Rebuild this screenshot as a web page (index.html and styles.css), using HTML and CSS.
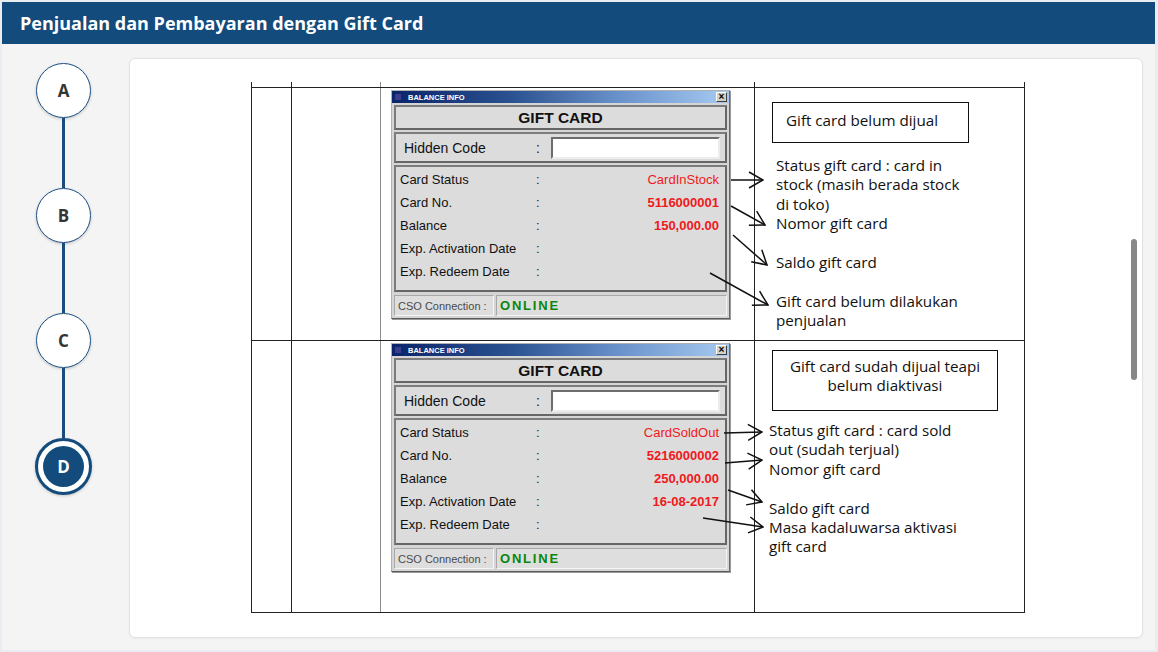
FILE: index.html
```html
<!DOCTYPE html>
<html lang="id">
<head>
<meta charset="utf-8">
<title>Penjualan dan Pembayaran dengan Gift Card</title>
<link rel="stylesheet" href="styles.css">
</head>
<body>
<div class="app">
  <header class="topbar"><h1 class="title">Penjualan dan Pembayaran dengan Gift Card</h1></header>
  <div class="main">
    <nav class="stepper">
      <div class="step">A</div><div class="conn"></div>
      <div class="step">B</div><div class="conn"></div>
      <div class="step">C</div><div class="conn"></div>
      <div class="step step-active"><span class="step-core">D</span></div>
    </nav>
    <section class="card">
      <div class="doc">
        <div class="doc-row doc-row-top"><div class="c c1"></div><div class="c c2"></div><div class="c c3"></div><div class="c c4"></div></div>

        <div class="doc-row doc-row-1">
          <div class="c c1"></div><div class="c c2"></div>
          <div class="c c3">
            <div class="win">
              <div class="win-title"><span class="win-icon"></span><span class="win-name">BALANCE INFO</span><span class="win-close">×</span></div>
              <div class="panel gc-head">GIFT CARD</div>
              <div class="panel hidden"><span class="h-lbl">Hidden Code</span><span class="colon">:</span><span class="input"></span></div>
              <div class="panel details">
                <div class="row"><span class="lbl">Card Status</span><span class="colon">:</span><span class="val">CardInStock</span></div>
                <div class="row"><span class="lbl">Card No.</span><span class="colon">:</span><span class="val val-num">5116000001</span></div>
                <div class="row"><span class="lbl">Balance</span><span class="colon">:</span><span class="val val-num">150,000.00</span></div>
                <div class="row"><span class="lbl">Exp. Activation Date</span><span class="colon">:</span></div>
                <div class="row"><span class="lbl">Exp. Redeem Date</span><span class="colon">:</span></div>
              </div>
              <div class="status"><span class="st-l">CSO Connection :</span><span class="st-r">ONLINE</span></div>
            </div>
          </div>
          <div class="c c4">
            <div class="note-box">Gift card belum dijual</div>
            <div class="notes">
              <p>Status gift card : card in<br>stock (masih berada stock<br>di toko)</p>
              <p>Nomor gift card</p>
              <p class="gap-before">Saldo gift card</p>
              <p class="gap-before">Gift card belum dilakukan<br>penjualan</p>
            </div>
          </div>
        </div>

        <div class="doc-row doc-row-2">
          <div class="c c1"></div><div class="c c2"></div>
          <div class="c c3">
            <div class="win">
              <div class="win-title"><span class="win-icon"></span><span class="win-name">BALANCE INFO</span><span class="win-close">×</span></div>
              <div class="panel gc-head">GIFT CARD</div>
              <div class="panel hidden"><span class="h-lbl">Hidden Code</span><span class="colon">:</span><span class="input"></span></div>
              <div class="panel details">
                <div class="row"><span class="lbl">Card Status</span><span class="colon">:</span><span class="val">CardSoldOut</span></div>
                <div class="row"><span class="lbl">Card No.</span><span class="colon">:</span><span class="val val-num">5216000002</span></div>
                <div class="row"><span class="lbl">Balance</span><span class="colon">:</span><span class="val val-num">250,000.00</span></div>
                <div class="row"><span class="lbl">Exp. Activation Date</span><span class="colon">:</span><span class="val val-num">16-08-2017</span></div>
                <div class="row"><span class="lbl">Exp. Redeem Date</span><span class="colon">:</span></div>
              </div>
              <div class="status"><span class="st-l">CSO Connection :</span><span class="st-r">ONLINE</span></div>
            </div>
          </div>
          <div class="c c4">
            <div class="note-box note-box-2">Gift card sudah dijual teapi<br>belum diaktivasi</div>
            <div class="notes notes-2">
              <p>Status gift card : card sold<br>out (sudah terjual)<br>Nomor gift card</p>
              <p class="gap-before">Saldo gift card<br>Masa kadaluwarsa aktivasi<br>gift card</p>
            </div>
          </div>
        </div>

        <svg class="arrows" viewBox="251 82 774 531" width="774" height="531" aria-hidden="true">
          <defs>
            <marker id="ah" markerUnits="userSpaceOnUse" markerWidth="16" markerHeight="20" viewBox="0 0 16 20" refX="15" refY="10" orient="auto">
              <path d="M1,2 L15,10 L1,18" fill="none" stroke="#111" stroke-width="1.5"/>
            </marker>
          </defs>
          <g stroke="#111" stroke-width="1.5" fill="none" marker-end="url(#ah)">
            <path d="M731 180 L763 180"/>
            <path d="M731 206 L765 225"/>
            <path d="M733 235 L767 265"/>
            <path d="M710 273 L768 305"/>
            <path d="M724 433 L762 432"/>
            <path d="M725 463 L762 460"/>
            <path d="M728 490 L762 502"/>
            <path d="M703 518 L763 527"/>
          </g>
        </svg>
      </div>
      <div class="scrollbar"></div>
    </section>
  </div>
</div>
</body>
</html>
```

FILE: styles.css
```css
* { box-sizing: border-box; }
html, body { margin: 0; padding: 0; background: #e9edf1; }
body { font-family: "Open Sans", "Liberation Sans", sans-serif; }

.app {
  margin: 2px 3px 2px 2px;
  height: 648px;
  display: flex;
  flex-direction: column;
  background: #f4f4f4;
}
.topbar {
  flex: none;
  height: 42px;
  background: #124b7c;
  display: flex;
  align-items: center;
  padding-left: 18px;
}
.title {
  margin: 0;
  color: #fff;
  font-size: 18px;
  font-weight: 700;
  letter-spacing: 0;
}
.main {
  flex: 1;
  min-height: 0;
  display: flex;
  padding: 14px 12px 12px 0;
}

/* stepper */
.stepper {
  flex: none;
  width: 127px;
  display: flex;
  flex-direction: column;
  align-items: flex-start;
  padding: 5px 0 0 34px;
}
.step {
  width: 55px;
  height: 55px;
  border-radius: 50%;
  border: 1.5px solid #1d5286;
  background: #fff;
  display: flex;
  align-items: center;
  justify-content: center;
  font-size: 17px;
  font-weight: 700;
  color: #353535;
  box-shadow: 0 1px 3px rgba(0, 0, 0, 0.2);
}
.conn {
  width: 3px;
  height: 70px;
  margin-left: 26px;
  background: #1a4c7c;
}
.step-active {
  width: 57px;
  height: 57px;
  margin-left: -1px;
  border: 3px solid #124b7c;
}
.step-core {
  width: 41px;
  height: 41px;
  border-radius: 50%;
  background: #124b7c;
  color: #fff;
  display: flex;
  align-items: center;
  justify-content: center;
}

/* card */
.card {
  flex: 1;
  position: relative;
  background: #fff;
  border: 1px solid #e2e2e2;
  border-radius: 6px;
  padding: 23px 0 0 121px;
  box-shadow: 0 1px 2px rgba(0, 0, 0, 0.04);
}
.scrollbar {
  position: absolute;
  right: 5px;
  top: 180px;
  width: 6px;
  height: 141px;
  border-radius: 3px;
  background: #888;
}

/* document table */
.doc {
  position: relative;
  width: 774px;
  font-family: "Liberation Sans", Arial, sans-serif;
}
.doc-row { display: flex; border-top: 1px solid #222; }
.doc-row-top { border-top: none; height: 5px; }
.doc-row-1 { height: 253px; }
.doc-row-2 { height: 273px; border-bottom: 1px solid #222; }
.c { border-left: 1px solid #222; }
.c1 { width: 40px; }
.c2 { width: 89px; }
.c3 { width: 374px; border-left: 1px solid #8c8c8c; }
.c4 { width: 271px; border-right: 1px solid #222; }

/* windows dialog */
.win {
  margin: 2px 0 0 10px;
  width: 339px;
  background: #d5d5d5;
  border: 1px solid #b0b0b0;
  border-right-color: #6a6a6a;
  border-bottom-color: #5a5a5a;
  padding: 0 2px 2px;
  box-shadow: 1px 1px 0 #9a9a9a;
}
.win-title {
  height: 12px;
  margin: 0 -2px;
  background: linear-gradient(90deg, #0a246a 0%, #2a5190 35%, #6f97cf 70%, #a6caf0 100%);
  display: flex;
  align-items: center;
  padding: 0 2px 0 3px;
}
.win-icon {
  width: 6px;
  height: 6px;
  background: #3b3b8f;
  margin-right: 7px;
}
.win-name {
  color: #fff;
  font-size: 7.5px;
  font-weight: 700;
}
.win-close {
  margin-left: auto;
  width: 11px;
  height: 10px;
  background: #d4d0c8;
  border: 1px solid;
  border-color: #fff #404040 #404040 #fff;
  font-size: 10px;
  line-height: 7px;
  font-weight: 700;
  text-align: center;
  color: #000;
}
.panel {
  background: #dcdcdc;
  border: 2px solid;
  border-color: #7c7c7c #666 #666 #7c7c7c;
  margin-top: 2px;
}
.gc-head {
  height: 25px;
  display: flex;
  align-items: center;
  justify-content: center;
  font-size: 15.5px;
  font-weight: 700;
  color: #111;
}
.hidden {
  height: 31px;
  display: flex;
  align-items: center;
  padding-left: 8px;
  font-size: 14px;
  color: #111;
}
.h-lbl { width: 132px; }
.colon { width: 13px; color: #222; }
.input {
  width: 169px;
  height: 22px;
  margin-left: 2px;
  background: #fff;
  border: 2px solid;
  border-color: #6d6d6d #ececec #ececec #6d6d6d;
}
.details {
  height: 127px;
  padding: 1px 6px 0 4px;
  font-size: 13px;
  color: #111;
}
.row {
  display: flex;
  align-items: center;
  height: 23px;
}
.row .lbl { width: 136px; }
.val { margin-left: auto; color: #f0191b; }
.val-num { font-weight: 700; }
.status {
  height: 21px;
  margin-top: 3px;
  display: flex;
}
.st-l {
  width: 100px;
  border: 1px solid;
  border-color: #a8a8a8 #f4f4f4 #f4f4f4 #a8a8a8;
  background: #dedede;
  font-size: 11px;
  color: #4a4a4a;
  padding-left: 3px;
  display: flex;
  align-items: center;
}
.st-r {
  flex: 1;
  margin-left: 2px;
  border: 1px solid;
  border-color: #a8a8a8 #f4f4f4 #f4f4f4 #a8a8a8;
  background: #dedede;
  font-size: 13px;
  font-weight: 700;
  letter-spacing: 1.8px;
  color: #0a870a;
  padding-left: 3px;
  display: flex;
  align-items: center;
}

/* annotations */
.note-box {
  margin: 14px 0 0 17px;
  width: 197px;
  height: 41px;
  border: 1.5px solid #111;
  display: flex;
  align-items: center;
  padding: 0 0 5px 13px;
  font-family: "Open Sans", sans-serif;
  font-size: 15.2px;
  color: #111;
}
.note-box-2 {
  margin-top: 9px;
  width: 226px;
  height: 61px;
  padding: 0 0 9px;
  justify-content: center;
  text-align: center;
  line-height: 19.5px;
}
.notes {
  margin: 13px 0 0 21px;
  font-family: "Open Sans", sans-serif;
  font-size: 15.2px;
  line-height: 19.4px;
  color: #111;
}
.notes p { margin: 0; }
.notes .gap-before { margin-top: 19.4px; }
.notes-2 { margin: 10px 0 0 14px; }

.arrows {
  position: absolute;
  left: 0;
  top: 0;
  overflow: visible;
  pointer-events: none;
}
```
